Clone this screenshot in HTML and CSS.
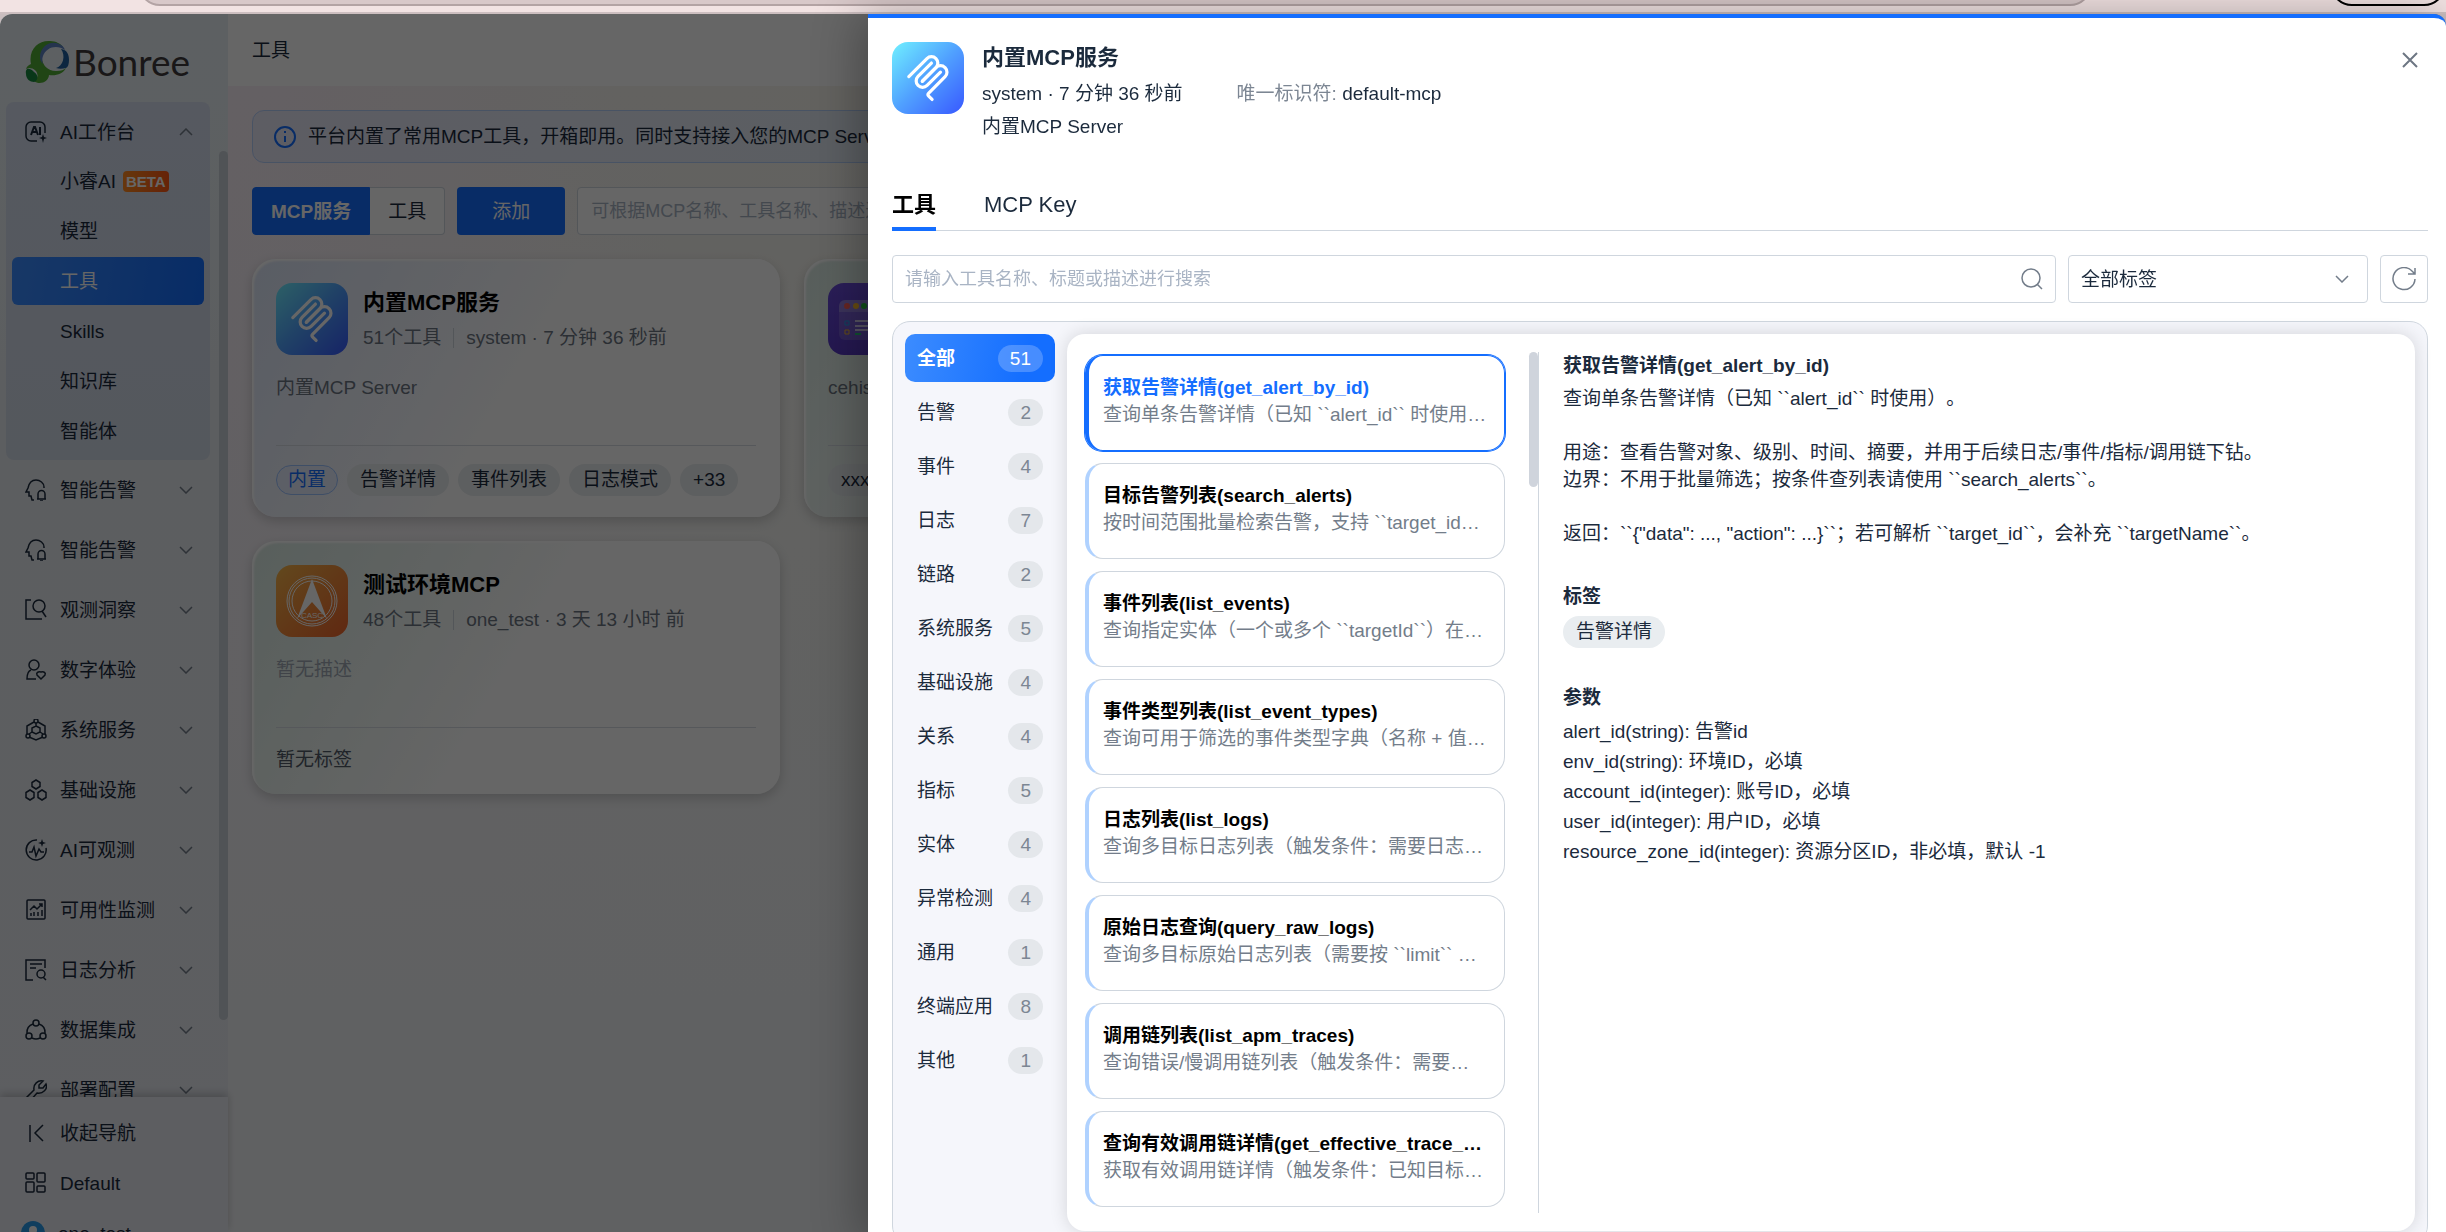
FILE: index.html
```html
<!DOCTYPE html>
<html lang="zh-CN">
<head>
    <meta charset="UTF-8">
    <meta name="viewport" content="width=device-width, initial-scale=1.0">
    <title>工具</title>
    <link rel="stylesheet" href="styles.css">
</head>
<body>
    <svg class="sprite" aria-hidden="true">
        <symbol id="chevron" viewBox="0 0 14 8"><path d="M1 1l6 6 6-6"/></symbol>
        <symbol id="ai" viewBox="0 0 22 22"><path d="M12 20H6a5 5 0 0 1-5-5V6a5 5 0 0 1 5-5h9a5 5 0 0 1 5 5v6"/><path d="M6 14l3-8h1l3 8M7 11h5M15 6v8" stroke-width="2"/><path class="solid" d="M18 13l1 3 3 1-3 1-1 4-1-4-3-1 3-1z"/></symbol>
        <symbol id="alarm" viewBox="0 0 22 22"><path d="M9 21H7l-1-4H4v-4H1l2-4C4 4 7 1 11 1s8 3 8 7v1"/><path d="M13 20v-5a3 3 0 0 1 7 0v5M12 20h9M15 22h3"/></symbol>
        <symbol id="insight" viewBox="0 0 22 22"><path d="M6 1H1v19h16"/><circle cx="14" cy="7" r="6"/><path d="M17 12l4 6"/></symbol>
        <symbol id="user" viewBox="0 0 22 22"><circle cx="9" cy="6" r="5"/><path d="M6 11c-3 1-4 4-4 9h9"/><path d="M16 20l-4-4c-1-2 1-4 4-3 3-1 5 1 4 3z"/></symbol>
        <symbol id="system" viewBox="0 0 22 22"><path d="M9 3L2 7v8M13 3l7 4v8M4 18l7 3 7-3"/><path d="M11 7l4 2v4l-4 2-4-2V9zM11 4v3M7 13l-3 2M15 13l3 2"/><circle cx="11" cy="2" r="2"/><circle cx="3" cy="17" r="2"/><circle cx="19" cy="17" r="2"/></symbol>
        <symbol id="infra" viewBox="0 0 22 22"><path d="M11 1l4 2.500v4L11 10 7 7.500v-4z"/><path d="M5 11l4 2.500v5L5 21l-4-2.500v-5z"/><path d="M17 11l4 2.500v5L17 21l-4-2.500v-5z"/></symbol>
        <symbol id="pulse" viewBox="0 0 22 22"><path d="M12 1a10 10 0 1 0 9 8"/><path d="M4 13h3l2-5 2 9 3-7 2 3h3"/><path class="solid" d="M17 0l1 3 3 1-3 1-1 3-1-3-3-1 3-1z"/></symbol>
        <symbol id="chart" viewBox="0 0 22 22"><rect x="2" y="1" width="18" height="19" rx="1"/><path d="M5 11l4-4 3 3 5-5M14 5h3v3M6 17v-3M9 17v-4M13 17v-4M17 17v-6"/></symbol>
        <symbol id="log" viewBox="0 0 22 22"><path d="M8 21H1V1h19v8M5 5h12M5 9h6"/><circle cx="16" cy="15" r="4"/><path d="M18 18l3 3"/></symbol>
        <symbol id="data" viewBox="0 0 22 22"><circle cx="11" cy="4" r="3"/><circle cx="4" cy="17" r="3"/><circle cx="18" cy="17" r="3"/><path d="M8 5a9 9 0 0 0-6 9M14 5a9 9 0 0 1 6 9M7 19a9 9 0 0 0 8 0"/></symbol>
        <symbol id="wrench" viewBox="0 0 22 22"><path d="M1 19l8-8c-1-6 4-10 9-9l-4 4v3h4l3-4c2 5-3 10-9 9l-7 8z"/></symbol>
        <symbol id="mcp" viewBox="0 0 180 180"><path d="M18 84.850L85.880 16.970C95.250 7.600 110.450 7.600 119.820 16.970C129.200 26.340 129.200 41.540 119.820 50.910L68.560 102.180"/><path d="M69.270 101.470L119.820 50.910C129.200 41.540 144.390 41.540 153.770 50.910L154.120 51.270C163.490 60.640 163.490 75.830 154.120 85.210L92.720 146.600C89.600 149.720 89.600 154.790 92.720 157.910L105.330 170.520"/><path d="M102.850 33.940L52.650 84.150C43.280 93.520 43.280 108.710 52.650 118.090C62.020 127.460 77.220 127.460 86.590 118.090L136.790 67.880"/></symbol>
    </svg>

    <div class="browser-bar">
        <div class="address"></div>
        <div class="profile"></div>
    </div>

    <div class="app">
        <aside class="sidebar">
            <div class="logo">
                <svg width="46" height="44" viewBox="0 0 46 44">
                    <path fill="#52ac35" d="M6 24C3 9 14 0 25 1c6 0 11 3 13 6C28 3 18 7 17 16c-1 9 7 16 15 15 4 0 7-1 9-3-3 6-10 8-17 7 0 6-9 11-15 6l3-3c2-5-2-10-8-10-1 0-2 1-3 1 1-3 3-4 5-5z"/>
                    <path fill="#5d82c4" d="M15 17C15 7 25 0 34 4c3 1 5 3 6 6-8-6-19-3-22 6-1 3-1 5 0 8-2-2-3-4-3-7z"/>
                    <path fill="#1e5fa0" d="M36 9c6 1 8 5 8 11 0 4-1 7-3 8-4 1-7 1-10 0 7-2 10-12 5-19z"/>
                    <path fill="#178a40" d="M1 34c-1-7 4-6 8-2 5 3 4 9 0 10-4 0-8-3-8-8z"/>
                </svg>
                <span>Bonree</span>
            </div>
            <nav class="menu">
                <div class="menu-group">
                    <a class="menu-item" href="#"><svg class="icon"><use href="#ai"/></svg>AI工作台<svg class="chevron up"><use href="#chevron"/></svg></a>
                    <a class="sub-item" href="#">小睿AI<span class="beta">BETA</span></a>
                    <a class="sub-item" href="#">模型</a>
                    <a class="sub-item active" href="#">工具</a>
                    <a class="sub-item" href="#">Skills</a>
                    <a class="sub-item" href="#">知识库</a>
                    <a class="sub-item" href="#">智能体</a>
                </div>
                <a class="menu-item" href="#"><svg class="icon"><use href="#alarm"/></svg>智能告警<svg class="chevron"><use href="#chevron"/></svg></a>
                <a class="menu-item" href="#"><svg class="icon"><use href="#alarm"/></svg>智能告警<svg class="chevron"><use href="#chevron"/></svg></a>
                <a class="menu-item" href="#"><svg class="icon"><use href="#insight"/></svg>观测洞察<svg class="chevron"><use href="#chevron"/></svg></a>
                <a class="menu-item" href="#"><svg class="icon"><use href="#user"/></svg>数字体验<svg class="chevron"><use href="#chevron"/></svg></a>
                <a class="menu-item" href="#"><svg class="icon"><use href="#system"/></svg>系统服务<svg class="chevron"><use href="#chevron"/></svg></a>
                <a class="menu-item" href="#"><svg class="icon"><use href="#infra"/></svg>基础设施<svg class="chevron"><use href="#chevron"/></svg></a>
                <a class="menu-item" href="#"><svg class="icon"><use href="#pulse"/></svg>AI可观测<svg class="chevron"><use href="#chevron"/></svg></a>
                <a class="menu-item" href="#"><svg class="icon"><use href="#chart"/></svg>可用性监测<svg class="chevron"><use href="#chevron"/></svg></a>
                <a class="menu-item" href="#"><svg class="icon"><use href="#log"/></svg>日志分析<svg class="chevron"><use href="#chevron"/></svg></a>
                <a class="menu-item" href="#"><svg class="icon"><use href="#data"/></svg>数据集成<svg class="chevron"><use href="#chevron"/></svg></a>
                <a class="menu-item" href="#"><svg class="icon"><use href="#wrench"/></svg>部署配置<svg class="chevron"><use href="#chevron"/></svg></a>
            </nav>
            <div class="menu-thumb"></div>
            <div class="sidebar-footer">
                <button class="footer-item"><svg class="icon" viewBox="0 0 22 22"><path d="M5 3v17M18 3l-8 8 8 8"/></svg>收起导航</button>
                <button class="footer-item"><svg class="icon" viewBox="0 0 22 22"><rect x="1" y="1" width="8" height="6" rx="1"/><rect x="12" y="1" width="8" height="9" rx="1"/><rect x="1" y="10" width="8" height="10" rx="1"/><rect x="12" y="14" width="8" height="6" rx="1"/></svg>Default</button>
                <button class="footer-item user"><svg width="24" height="24" viewBox="0 0 24 24"><circle cx="12" cy="12" r="12" fill="#2a9bea" stroke="none"/><circle cx="12" cy="9" r="4" fill="#fff" stroke="none"/><path d="M4 20c2-8 14-8 16 0z" fill="#fff" stroke="none"/></svg>one_test</button>
            </div>
        </aside>

        <main class="main">
            <header class="page-header">工具</header>
            <div class="page">
                <div class="notice">
                    <svg width="22" height="22" viewBox="0 0 22 22"><circle cx="11" cy="11" r="10"/><path d="M11 10v6M11 5v2"/></svg>
                    <span>平台内置了常用MCP工具，开箱即用。同时支持接入您的MCP Server</span>
                </div>
                <div class="toolbar">
                    <div class="segment">
                        <button class="on">MCP服务</button>
                        <button>工具</button>
                    </div>
                    <button class="add">添加</button>
                    <input class="filter" type="text" aria-label="搜索MCP" placeholder="可根据MCP名称、工具名称、描述进行搜索">
                </div>
                <div class="cards">
                    <section class="card blue">
                        <div class="card-top">
                            <div class="app-icon"><svg><use href="#mcp"/></svg></div>
                            <div>
                                <h3>内置MCP服务</h3>
                                <p class="meta">51个工具<i></i>system · 7 分钟 36 秒前</p>
                            </div>
                        </div>
                        <p class="card-desc">内置MCP Server</p>
                        <div class="card-tags">
                            <span class="tag outlined">内置</span>
                            <span class="tag">告警详情</span>
                            <span class="tag">事件列表</span>
                            <span class="tag">日志模式</span>
                            <span class="tag">+33</span>
                        </div>
                    </section>
                    <section class="card green">
                        <div class="card-top">
                            <div class="app-icon purple">
                                <svg viewBox="0 0 72 72">
                                    <rect x="11" y="17" width="50" height="40" rx="6" fill="#fff" opacity=".15"/>
                                    <path d="M11 29v-6a6 6 0 0 1 6-6h38a6 6 0 0 1 6 6v6z" fill="#fff" opacity=".2"/>
                                    <circle cx="19" cy="23" r="3" fill="#ff5f57"/><circle cx="28" cy="23" r="3" fill="#febc2e"/><circle cx="36" cy="23" r="3" fill="#28c840"/>
                                    <path d="M17 38h4v4h-4z" fill="none" stroke="#22a7f0"/><path d="M17 47h4v4h-4z" fill="none" stroke="#febc2e"/>
                                    <path d="M27 38h26M27 43h22M27 47h24" stroke="#fff" stroke-width="2" opacity=".7"/><path d="M27 51h6" stroke="#28c878" stroke-width="2"/>
                                </svg>
                            </div>
                        </div>
                        <p class="card-desc">cehis</p>
                        <div class="card-tags"><span class="tag">xxx</span></div>
                    </section>
                    <section class="card green row-start">
                        <div class="card-top">
                            <div class="app-icon orange">
                                <svg viewBox="0 0 72 72">
                                    <circle cx="36" cy="36" r="25" fill="none" stroke="#fff"/><circle cx="36" cy="36" r="23" fill="none" stroke="#fff"/><circle cx="36" cy="36" r="20" fill="none" stroke="#fff"/>
                                    <path d="M36 14L21 54l15-17 15 17z" fill="#fff"/>
                                    <text x="36" y="53" text-anchor="middle" font-size="8">CASC</text>
                                </svg>
                            </div>
                            <div>
                                <h3>测试环境MCP</h3>
                                <p class="meta">48个工具<i></i>one_test · 3 天 13 小时 前</p>
                            </div>
                        </div>
                        <p class="card-desc empty">暂无描述</p>
                        <div class="card-tags none">暂无标签</div>
                    </section>
                </div>
            </div>
        </main>
        <div class="mask"></div>
    </div>

    <div class="drawer" role="dialog" aria-label="内置MCP服务">
        <header class="drawer-header">
            <div class="app-icon"><svg><use href="#mcp"/></svg></div>
            <div class="drawer-info">
                <h2>内置MCP服务</h2>
                <p><span>system · 7 分钟 36 秒前</span><span><em>唯一标识符:</em> default-mcp</span></p>
                <p>内置MCP Server</p>
            </div>
            <button class="close" aria-label="关闭"><svg width="16" height="16" viewBox="0 0 16 16"><path d="M1 1l14 14M15 1L1 15"/></svg></button>
        </header>
        <div class="tabs">
            <button class="tab on">工具</button>
            <button class="tab">MCP Key</button>
        </div>
        <div class="search-row">
            <div class="search-box">
                <input type="text" aria-label="搜索工具" placeholder="请输入工具名称、标题或描述进行搜索">
                <svg width="22" height="22" viewBox="0 0 22 22"><circle cx="10" cy="10" r="9"/><path d="M16 16l5 5"/></svg>
            </div>
            <div class="select-box">
                <select aria-label="标签">
                    <option>全部标签</option>
                </select>
                <svg class="chevron"><use href="#chevron"/></svg>
            </div>
            <button class="refresh" aria-label="刷新"><svg width="24" height="24" viewBox="0 0 24 24"><path d="M23 12A11 11 0 1 1 20 4l3 3M23 1v6h-7"/></svg></button>
        </div>
        <div class="panel">
            <div class="categories">
                <button class="category on">全部<span>51</span></button>
                <button class="category">告警<span>2</span></button>
                <button class="category">事件<span>4</span></button>
                <button class="category">日志<span>7</span></button>
                <button class="category">链路<span>2</span></button>
                <button class="category">系统服务<span>5</span></button>
                <button class="category">基础设施<span>4</span></button>
                <button class="category">关系<span>4</span></button>
                <button class="category">指标<span>5</span></button>
                <button class="category">实体<span>4</span></button>
                <button class="category">异常检测<span>4</span></button>
                <button class="category">通用<span>1</span></button>
                <button class="category">终端应用<span>8</span></button>
                <button class="category">其他<span>1</span></button>
            </div>
            <div class="content">
                <div class="tool-list">
                    <div class="tool on">
                        <h4>获取告警详情(get_alert_by_id)</h4>
                        <p>查询单条告警详情（已知 ``alert_id`` 时使用…</p>
                    </div>
                    <div class="tool">
                        <h4>目标告警列表(search_alerts)</h4>
                        <p>按时间范围批量检索告警，支持 ``target_id…</p>
                    </div>
                    <div class="tool">
                        <h4>事件列表(list_events)</h4>
                        <p>查询指定实体（一个或多个 ``targetId``）在…</p>
                    </div>
                    <div class="tool">
                        <h4>事件类型列表(list_event_types)</h4>
                        <p>查询可用于筛选的事件类型字典（名称 + 值…</p>
                    </div>
                    <div class="tool">
                        <h4>日志列表(list_logs)</h4>
                        <p>查询多目标日志列表（触发条件：需要日志…</p>
                    </div>
                    <div class="tool">
                        <h4>原始日志查询(query_raw_logs)</h4>
                        <p>查询多目标原始日志列表（需要按 ``limit`` …</p>
                    </div>
                    <div class="tool">
                        <h4>调用链列表(list_apm_traces)</h4>
                        <p>查询错误/慢调用链列表（触发条件：需要…</p>
                    </div>
                    <div class="tool">
                        <h4>查询有效调用链详情(get_effective_trace_…</h4>
                        <p>获取有效调用链详情（触发条件：已知目标…</p>
                    </div>
                    <div class="list-thumb"></div>
                </div>
                <article class="detail">
                    <h4>获取告警详情(get_alert_by_id)</h4>
                    <p class="detail-text">查询单条告警详情（已知 ``alert_id`` 时使用）。

用途：查看告警对象、级别、时间、摘要，并用于后续日志/事件/指标/调用链下钻。
边界：不用于批量筛选；按条件查列表请使用 ``search_alerts``。

返回：``{"data": ..., "action": ...}``；若可解析 ``target_id``，会补充 ``targetName``。</p>
                    <h4>标签</h4>
                    <span class="tag">告警详情</span>
                    <h4>参数</h4>
                    <ul>
                        <li>alert_id(string): 告警id</li>
                        <li>env_id(string): 环境ID，必填</li>
                        <li>account_id(integer): 账号ID，必填</li>
                        <li>user_id(integer): 用户ID，必填</li>
                        <li>resource_zone_id(integer): 资源分区ID，非必填，默认 -1</li>
                    </ul>
                </article>
            </div>
        </div>
    </div>
</body>
</html>
```
FILE: styles.css
```css
* {
    box-sizing: border-box;
}

body {
    margin: 0;
    height: 100vh;
    overflow: hidden;
    display: flex;
    flex-direction: column;
    background: #c9bdbe;
    color: #1b2a3c;
    font-family: "Liberation Sans", "Noto Sans CJK SC", sans-serif;
    font-size: 19px;
    line-height: 27px;
    text-spacing-trim: space-all;
}

h2, h3, h4, p, ul {
    margin: 0;
    padding: 0;
}

button, input, select {
    font: inherit;
    color: inherit;
    background: none;
    border: none;
    padding: 0;
}

button {
    cursor: pointer;
}

a {
    color: inherit;
    text-decoration: none;
}

svg {
    fill: none;
    stroke: currentColor;
    stroke-width: 1.5;
    flex: none;
}

svg text, .solid {
    fill: currentColor;
    stroke: none;
}

.sprite {
    position: absolute;
    width: 0;
    height: 0;
}

.icon {
    width: 22px;
    height: 22px;
}

.chevron {
    width: 14px;
    height: 8px;
    color: #737d8a;
}

.chevron.up {
    transform: rotate(180deg);
}

/* browser bar */
.browser-bar {
    flex: none;
    display: flex;
    align-items: flex-end;
    gap: 238px;
    height: 14px;
    padding: 0 0 6px 138px;
    background: #f2e3e3;
    border-bottom: 2px solid #cdbfc0;
    overflow: hidden;
}

.address {
    flex: 1;
    height: 44px;
    border: 2px solid #b3a3a4;
    border-radius: 22px;
    background: #d8c8c9;
}

.profile {
    width: 116px;
    height: 44px;
    border: 2px solid #000;
    border-radius: 22px;
}

/* app */
.app {
    position: relative;
    flex: 1;
    min-height: 0;
    display: flex;
    overflow: hidden;
    border-radius: 12px 12px 0 0;
}

.mask {
    position: absolute;
    inset: 0;
    background: rgba(0, 0, 0, 0.6);
}

.sidebar {
    position: relative;
    flex: none;
    width: 228px;
    display: flex;
    flex-direction: column;
    background: linear-gradient(#e8f1f5, #e7ebf0 35%, #e8ebf2);
    color: #1b2a3c;
}

.logo {
    flex: none;
    display: flex;
    align-items: center;
    gap: 2px;
    height: 88px;
    padding: 8px 0 0 25px;
    color: #403b3c;
    font-family: Lato, "Liberation Sans", sans-serif;
    font-size: 37px;
    line-height: 44px;
}

.logo svg {
    stroke: none;
}

.menu {
    flex: 1;
    min-height: 0;
    overflow: hidden;
}

.menu-group {
    margin: 0 18px 0 6px;
    padding: 5px 6px 3px;
    border-radius: 8px;
    background: linear-gradient(#d6dff0, #d3dbe8);
}

.menu-item {
    display: flex;
    align-items: center;
    gap: 13px;
    height: 60px;
    padding: 0 35px 0 25px;
}

.menu-item .chevron {
    margin-left: auto;
}

.menu-group .menu-item {
    height: 50px;
    padding: 0 11px 0 13px;
}

.sub-item {
    display: flex;
    align-items: center;
    gap: 7px;
    height: 48px;
    margin-bottom: 2px;
    padding-left: 48px;
    border-radius: 6px;
}

.sub-item.active {
    background: linear-gradient(100deg, #3c8cff, #146eff);
    color: #fff;
}

.beta {
    padding: 0 3px;
    border-radius: 4px;
    background: linear-gradient(90deg, #ff8a1f, #ff5714);
    color: #fff;
    font-size: 15px;
    font-weight: bold;
    line-height: 21px;
}

.menu-thumb {
    position: absolute;
    top: 137px;
    right: 0;
    width: 9px;
    height: 869px;
    border-radius: 5px;
    background: #c9cfd6;
}

.sidebar-footer {
    position: relative;
    flex: none;
    height: 135px;
    padding-top: 11px;
    background: #e8ebf2;
    box-shadow: 0 -3px 8px rgba(0, 0, 0, 0.2);
}

.footer-item {
    display: flex;
    align-items: center;
    gap: 13px;
    width: 100%;
    height: 50px;
    padding-left: 25px;
}

.footer-item.user {
    padding-left: 21px;
}

.main {
    flex: 1;
    min-width: 0;
    display: flex;
    flex-direction: column;
}

.page-header {
    flex: none;
    display: flex;
    align-items: center;
    height: 72px;
    padding-left: 24px;
    background: #fff;
}

.page {
    flex: 1;
    padding: 24px 10px 24px 24px;
    background:
        linear-gradient(rgba(241, 243, 246, 0), #f1f3f6 80%),
        linear-gradient(90deg, #faf0f8, #f7f5f0 20%, #f7f7ea 40%, #eef4f4);
}

.notice {
    display: flex;
    align-items: center;
    gap: 12px;
    height: 53px;
    padding: 0 21px;
    border: 1px solid #b5cffa;
    border-radius: 12px;
    background: linear-gradient(90deg, #e8e8f8, #e2eef5 40%);
}

.notice svg {
    color: #146eff;
    stroke-width: 2;
}

.toolbar {
    display: flex;
    gap: 12px;
    margin: 24px 0;
}

.segment {
    display: flex;
}

.segment button {
    height: 48px;
    padding: 0 18px;
    border: 1px solid #cfd6de;
    border-left: none;
    border-radius: 0 4px 4px 0;
    background: #fff;
}

.segment .on {
    border: 1px solid #146eff;
    border-radius: 4px 0 0 4px;
    background: #146eff;
    color: #fff;
    font-weight: bold;
}

.add {
    padding: 0 35px;
    border-radius: 4px;
    background: #146eff;
    color: #fff;
}

.filter {
    flex: 1;
    padding: 0 13px;
    border: 1px solid #cfd6de;
    border-radius: 4px;
    background: #fff;
    font-size: 18px;
}

::placeholder {
    color: #a9b4c4;
    opacity: 1;
}

.cards {
    display: grid;
    grid-template-columns: repeat(4, 1fr);
    align-items: start;
    gap: 24px;
}

.card {
    padding: 24px 24px 21px;
    border-radius: 24px;
    box-shadow: inset 2px 2px 2px #fff, 0 4px 12px rgba(0, 0, 0, 0.18);
}

.card.blue {
    background: linear-gradient(120deg, #dfe8fb, #fff 50%);
}

.card.green {
    background: linear-gradient(120deg, #dcede6, #fff 50%);
}

.row-start {
    grid-column-start: 1;
}

.card-top {
    display: flex;
    gap: 15px;
}

.card-top h3 {
    margin: 6px 0 8px;
    color: #000;
    font-size: 22px;
}

.app-icon {
    flex: none;
    display: flex;
    align-items: center;
    justify-content: center;
    width: 72px;
    height: 72px;
    border-radius: 16px;
    background: linear-gradient(135deg, #70f0ff, #50a0ff 50%, #3858ff);
    color: #fff;
}

.app-icon svg {
    width: 48px;
    height: 48px;
    stroke-width: 12;
    stroke-linecap: round;
}

.app-icon.purple svg, .app-icon.orange svg {
    width: 72px;
    height: 72px;
    stroke: none;
    stroke-width: 1;
    stroke-linecap: butt;
}

.app-icon.purple {
    background: linear-gradient(#6b4ddc, #5a3bc8);
}

.app-icon.orange {
    background: linear-gradient(135deg, #f5b54a, #f0642c);
}

.meta {
    display: flex;
    align-items: center;
    color: #6d7683;
}

.meta i {
    width: 1px;
    height: 20px;
    margin: 0 12px;
    background: #cfd6de;
}

.card-desc {
    height: 74px;
    margin-top: 16px;
    padding-top: 3px;
    color: #6d7683;
}

.card-desc.empty {
    color: #a0a8b4;
}

.card-tags {
    display: flex;
    align-items: center;
    gap: 9px;
    padding-top: 18px;
    border-top: 1px solid #d8dde3;
}

.card-tags.none {
    color: #505a68;
}

.tag {
    display: inline-block;
    padding: 0 13px;
    border-radius: 16px;
    background: #e9edf0;
    line-height: 32px;
}

.tag.outlined {
    padding: 0 11px;
    border: 1px solid #9cc2ff;
    background: #e5eeff;
    color: #146eff;
    line-height: 28px;
}

/* drawer */
.drawer {
    position: fixed;
    top: 14px;
    right: 0;
    bottom: -12px;
    left: 868px;
    display: flex;
    flex-direction: column;
    padding: 24px 18px 0 24px;
    border-top: 4px solid #146eff;
    border-top-right-radius: 12px;
    background: #fff;
    box-shadow: -8px 0 48px rgba(0, 0, 0, 0.3);
}

.drawer-header {
    display: flex;
    gap: 18px;
    height: 132px;
}

.drawer-info {
    flex: 1;
}

.drawer-info h2 {
    margin: 2px 0 8px;
    font-size: 22px;
    line-height: 28px;
}

.drawer-info p {
    display: flex;
    gap: 54px;
    margin-bottom: 6px;
}

.drawer-info em {
    color: #7c8693;
    font-style: normal;
}

.close {
    align-self: flex-start;
    margin: 10px 10px 0 0;
    line-height: 0;
    color: #6d7683;
}

.close svg {
    stroke-width: 2;
}

.tabs {
    flex: none;
    display: flex;
    gap: 48px;
    height: 57px;
    border-bottom: 1px solid #cfd6de;
}

.tab {
    height: 57px;
    padding: 8px 0 0;
    border-bottom: 4px solid transparent;
    font-size: 22px;
}

.tab.on {
    border-color: #146eff;
    color: #000;
    font-weight: bold;
}

.search-row {
    flex: none;
    display: flex;
    gap: 12px;
    height: 48px;
    margin: 24px 0 18px;
}

.search-box, .select-box, .refresh {
    display: flex;
    align-items: center;
    border: 1px solid #cfd6de;
    border-radius: 4px;
    color: #737d8a;
}

.search-box {
    flex: 1;
    padding: 0 12px;
}

.search-box input {
    flex: 1;
    font-size: 18px;
}

.select-box {
    position: relative;
    width: 300px;
}

.select-box select {
    width: 100%;
    height: 100%;
    padding: 0 12px;
    appearance: none;
    color: #1b2a3c;
}

.select-box .chevron {
    position: absolute;
    right: 18px;
    pointer-events: none;
}

.refresh {
    justify-content: center;
    width: 48px;
}

.panel {
    flex: 1;
    min-height: 0;
    display: flex;
    gap: 12px;
    padding: 12px;
    border: 1px solid #cfd6de;
    border-radius: 18px;
    background: #f5f6fb;
}

.categories {
    flex: none;
    display: flex;
    flex-direction: column;
    gap: 6px;
    width: 150px;
}

.category {
    display: flex;
    align-items: center;
    justify-content: space-between;
    height: 48px;
    padding: 0 12px;
    border-radius: 10px;
}

.category span {
    padding: 0 12px;
    border-radius: 14px;
    background: #e4e7eb;
    color: #7c8693;
}

.category.on {
    background: linear-gradient(100deg, #3c8cff, #146eff 80%);
    color: #fff;
    font-weight: bold;
}

.category.on span {
    background: rgba(255, 255, 255, 0.22);
    color: #fff;
    font-weight: normal;
}

.content {
    flex: 1;
    min-width: 0;
    display: flex;
    padding: 18px;
    border-radius: 18px;
    background: #fff;
    box-shadow: 0 0 18px rgba(0, 0, 0, 0.14);
}

.tool-list {
    position: relative;
    flex: none;
    display: flex;
    flex-direction: column;
    gap: 12px;
    width: 454px;
    padding: 3px 33px 0 0;
    border-right: 1px solid #cfd6de;
}

.list-thumb {
    position: absolute;
    top: 0;
    right: 0;
    width: 9px;
    height: 135px;
    border-radius: 5px;
    background: #cfd4dc;
}

.tool {
    height: 96px;
    padding: 18px 12px 0 14px;
    border: 1px solid #cfd6de;
    border-left: 4px solid #b0d2ff;
    border-radius: 18px;
}

.tool.on {
    border-color: #146eff;
    box-shadow: 0 0 0 1px #146eff;
}

.tool h4, .tool p {
    overflow: hidden;
    white-space: nowrap;
    text-overflow: ellipsis;
}

.tool h4 {
    color: #000;
}

.tool.on h4 {
    color: #146eff;
}

.tool p {
    color: #737d8a;
}

.detail {
    flex: 1;
    min-width: 0;
    padding-left: 24px;
}

.detail h4 {
    margin: 36px 0 6px;
}

.detail h4:first-child {
    margin-top: 0;
}

.detail-text {
    white-space: pre-line;
}

.detail .tag {
    display: table;
}

.detail ul {
    list-style: none;
    line-height: 30px;
}
```
